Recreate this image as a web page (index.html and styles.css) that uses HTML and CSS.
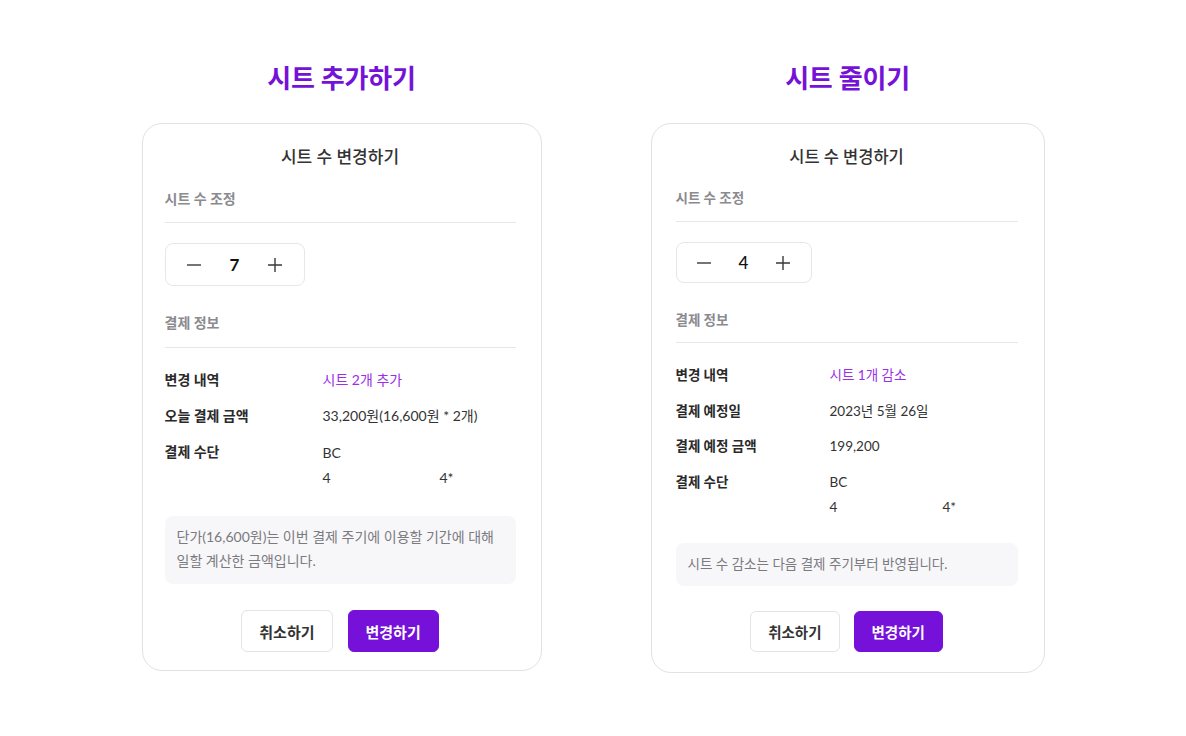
FILE: index.html
```html
<!DOCTYPE html>
<html lang="ko">
<head>
<meta charset="utf-8">
<title>시트 수 변경하기</title>
<link rel="stylesheet" href="styles.css">
</head>
<body>
<main class="page">
  <section class="column column--add">
    <h1 class="page-title">시트 추가하기</h1>
    <div class="card">
      <h2 class="card-title">시트 수 변경하기</h2>
      <div class="section-label">시트 수 조정</div>
      <div class="stepper">
        <button class="step-btn" aria-label="감소"><svg width="16" height="16" viewBox="0 0 16 16"><path d="M1 8h14" stroke="#3a3a3a" stroke-width="1.4" fill="none"/></svg></button>
        <span class="step-value">7</span>
        <button class="step-btn" aria-label="증가"><svg width="16" height="16" viewBox="0 0 16 16"><path d="M1 8h14M8 1v14" stroke="#3a3a3a" stroke-width="1.4" fill="none"/></svg></button>
      </div>
      <div class="section-label section-label--pay">결제 정보</div>
      <dl class="info">
        <dt>변경 내역</dt><dd class="accent">시트 2개 추가</dd>
        <dt>오늘 결제 금액</dt><dd>33,200원(16,600원 * 2개)</dd>
        <dt>결제 수단</dt><dd class="pay-method">BC<br><span class="num-first">4</span><span class="num-last">4*</span></dd>
      </dl>
      <p class="note">단가(16,600원)는 이번 결제 주기에 이용할 기간에 대해<br>일할 계산한 금액입니다.</p>
      <div class="actions">
        <button class="btn btn-cancel">취소하기</button>
        <button class="btn btn-primary">변경하기</button>
      </div>
    </div>
  </section>

  <section class="column column--reduce">
    <h1 class="page-title">시트 줄이기</h1>
    <div class="card">
      <h2 class="card-title">시트 수 변경하기</h2>
      <div class="section-label">시트 수 조정</div>
      <div class="stepper">
        <button class="step-btn" aria-label="감소"><svg width="16" height="16" viewBox="0 0 16 16"><path d="M1 8h14" stroke="#3a3a3a" stroke-width="1.4" fill="none"/></svg></button>
        <span class="step-value">4</span>
        <button class="step-btn" aria-label="증가"><svg width="16" height="16" viewBox="0 0 16 16"><path d="M1 8h14M8 1v14" stroke="#3a3a3a" stroke-width="1.4" fill="none"/></svg></button>
      </div>
      <div class="section-label section-label--pay">결제 정보</div>
      <dl class="info">
        <dt>변경 내역</dt><dd class="accent">시트 1개 감소</dd>
        <dt>결제 예정일</dt><dd>2023년 5월 26일</dd>
        <dt>결제 예정 금액</dt><dd>199,200</dd>
        <dt>결제 수단</dt><dd class="pay-method">BC<br><span class="num-first">4</span><span class="num-last">4*</span></dd>
      </dl>
      <p class="note">시트 수 감소는 다음 결제 주기부터 반영됩니다.</p>
      <div class="actions">
        <button class="btn btn-cancel">취소하기</button>
        <button class="btn btn-primary">변경하기</button>
      </div>
    </div>
  </section>
</main>
</body>
</html>
```

FILE: styles.css
```css
* { box-sizing: border-box; }

html, body {
  margin: 0;
  padding: 0;
  background: #ffffff;
}

body {
  font-family: Lato, "Noto Sans CJK KR", sans-serif;
  color: #333;
  width: 1186px;
  height: 736px;
  overflow: hidden;
}

.page {
  display: flex;
  justify-content: center;
  align-items: flex-start;
  gap: 109px;
  padding-top: 61px;
}

.column { display: flex; flex-direction: column; }
.column--add { width: 400px; }
.column--reduce { width: 394px; }

.page-title {
  margin: 0 0 28px;
  text-align: center;
  font-size: 26px;
  line-height: 34px;
  font-weight: 700;
  color: #7512d8;
  letter-spacing: -0.2px;
}

.card {
  border: 1px solid #e1e1e7;
  border-radius: 20px;
  padding: 21px 25px 18px 22px;
  display: flex;
  flex-direction: column;
}

.column--reduce .card { padding: 21px 26px 20px 24px; }

.card-title {
  margin: 0;
  text-align: center;
  font-size: 17px;
  line-height: 24px;
  font-weight: 500;
  color: #333;
}

.column--reduce .card-title { font-size: 16.5px; }

.section-label {
  margin-top: 20px;
  padding-bottom: 13px;
  border-bottom: 1px solid #e6e6ec;
  font-size: 14px;
  line-height: 20px;
  font-weight: 700;
  color: #8a8a8f;
}

.column--reduce .section-label { margin-top: 19px; font-size: 13.5px; }

.section-label--pay { margin-top: 27px; padding-bottom: 14px; }
.column--reduce .section-label--pay { margin-top: 27px; padding-bottom: 12px; }

.stepper {
  margin-top: 20px;
  width: 140px;
  height: 43px;
  border: 1px solid #e6e6ec;
  border-radius: 8px;
  padding: 0 8px;
  display: grid;
  grid-template-columns: 1fr 1fr 1fr;
  align-items: center;
  justify-items: center;
}

.column--reduce .stepper { width: 136px; height: 41px; }

.step-btn {
  border: 0;
  background: none;
  padding: 0;
  width: 24px;
  height: 24px;
  display: flex;
  align-items: center;
  justify-content: center;
}

.step-value {
  font-size: 17px;
  font-weight: 700;
  color: #111;
}

.column--reduce .step-value { font-weight: 500; }

.info {
  margin: 22px 0 0;
  display: grid;
  grid-template-columns: 158px 1fr;
  row-gap: 16px;
  font-size: 14px;
  line-height: 20px;
}

.column--reduce .info { grid-template-columns: 154px 1fr; row-gap: 15.5px; margin-top: 22px; font-size: 13.5px; }

.info dt {
  font-weight: 700;
  color: #2a2a2a;
}

.info dd {
  margin: 0;
  color: #333;
}

.info .accent { color: #9a2fe6; }

.pay-method { line-height: 25px; margin-top: -2px !important; }

.num-first { display: inline-block; width: 117px; }
.column--reduce .num-first { width: 113px; }

.note {
  margin: 26px 0 0;
  padding: 9px 12px 11px;
  background: #f7f7f9;
  border-radius: 8px;
  font-size: 14px;
  line-height: 24px;
  color: #7a7a80;
}

.column--reduce .note { margin-top: 23px; padding: 10px 12px; line-height: 23px; font-size: 13.5px; }

.actions {
  margin-top: 26px;
  display: flex;
  justify-content: center;
  gap: 15px;
}

.column--reduce .actions { margin-top: 25px; gap: 14px; }

.btn {
  height: 42px;
  padding: 0 17px;
  border-radius: 6px;
  font-family: Lato, "Noto Sans CJK KR", sans-serif;
  font-size: 15px;
  font-weight: 700;
  cursor: pointer;
}

.column--reduce .btn { height: 41px; font-size: 14.5px; }

.btn-cancel {
  background: #fff;
  border: 1px solid #e3e3e8;
  color: #333;
}

.btn-primary {
  background: #7511d9;
  border: 1px solid #7511d9;
  color: #fff;
}
```
